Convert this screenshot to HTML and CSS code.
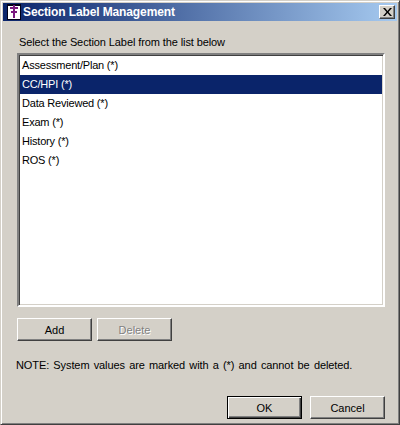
FILE: index.html
```html
<!DOCTYPE html>
<html lang="en">
<head>
    <meta charset="UTF-8">
    <title>Section Label Management</title>
    <link rel="stylesheet" href="styles.css">
</head>
<body>

<div class="window">
    <!-- Title bar -->
    <div class="titlebar">
        <svg class="app-icon" width="14" height="16" viewBox="0 0 14 16">
            <rect x="0" y="0" width="14" height="16" fill="#000018"/>
            <rect x="1" y="1" width="12" height="14" fill="#fff"/>
            <rect x="1" y="1" width="12" height="1" fill="#000018"/>
            <rect x="6" y="1" width="2" height="13" fill="#7a1a80"/>
            <rect x="3" y="3" width="8" height="2" fill="#7a1a80"/>
            <rect x="4" y="7" width="6" height="2" fill="#7a1a80"/>
        </svg>
        <span class="title">Section Label Management</span>
        <button class="close-btn">
            <svg width="9" height="8" viewBox="0 0 9 8">
                <path d="M0 0h2l2.500 3 2.500-3h2l-3.500 4 3.500 4h-2l-2.500-3-2.500 3h-2l3.500-4z" fill="#000"/>
            </svg>
        </button>
    </div>

    <div class="content">
        <p class="prompt">Select the Section Label from the list below</p>

        <ul class="listbox">
            <li>Assessment/Plan (*)</li>
            <li class="selected">CC/HPI (*)</li>
            <li>Data Reviewed (*)</li>
            <li>Exam (*)</li>
            <li>History (*)</li>
            <li>ROS (*)</li>
        </ul>

        <div class="list-actions">
            <button class="btn">Add</button>
            <button class="btn disabled">Delete</button>
        </div>

        <p class="note">NOTE: System values are marked with a (*) and cannot be deleted.</p>

        <div class="dialog-actions">
            <button class="btn default">OK</button>
            <button class="btn">Cancel</button>
        </div>
    </div>
</div>

</body>
</html>
```

FILE: styles.css
```css
html, body {
    margin: 0;
    padding: 0;
}
body {
    width: 400px;
    height: 425px;
    overflow: hidden;
    background: #d4d0c8;
    font-family: "Liberation Sans", Arial, sans-serif;
    font-size: 11px;
    color: #000;
}
.window {
    box-sizing: border-box;
    width: 400px;
    height: 425px;
    padding: 2px;
    background: #d4d0c8;
    border-top: 1px solid #d4d0c8;
    border-left: 1px solid #d4d0c8;
    border-right: 1px solid #404040;
    border-bottom: 1px solid #404040;
    box-shadow: inset 1px 1px 0 #fff, inset -1px -1px 0 #808080;
    display: flex;
    flex-direction: column;
}
.titlebar {
    height: 18px;
    flex: none;
    display: flex;
    align-items: center;
    padding: 0 2px 0 4px;
    background: linear-gradient(to right, #0a246a, #a6caf0);
    color: #fff;
}
.app-icon {
    flex: none;
    margin-right: 2px;
}
.title {
    flex: 1;
    font-weight: bold;
    font-size: 12px;
    letter-spacing: -0.12px;
    white-space: nowrap;
}
.close-btn {
    box-sizing: border-box;
    width: 16px;
    height: 14px;
    padding: 0;
    display: flex;
    align-items: center;
    justify-content: center;
    background: #d4d0c8;
    border: 1px solid;
    border-color: #fff #404040 #404040 #fff;
    box-shadow: inset -1px -1px 0 #808080;
}
.content {
    flex: 1;
    display: flex;
    flex-direction: column;
    padding: 0 12px 0 14px;
}
.prompt {
    margin: 14px 0 0 2px;
    height: 14px;
    line-height: 14px;
    letter-spacing: -0.1px;
    white-space: nowrap;
}
.listbox {
    box-sizing: border-box;
    list-style: none;
    margin: 4px 0 0;
    padding: 1px 1px 0;
    height: 254px;
    background: #fff;
    border: 2px solid;
    border-color: #808080 #fff #fff #808080;
    box-shadow: inset 1px 1px 0 #404040, inset -1px -1px 0 #d4d0c8;
}
.listbox li {
    height: 19px;
    line-height: 19px;
    padding: 0 2px;
    letter-spacing: -0.2px;
}
.listbox li.selected {
    background: #0a246a;
    color: #fff;
}
.list-actions {
    display: flex;
    gap: 5px;
    margin-top: 11px;
}
.btn {
    box-sizing: border-box;
    width: 75px;
    height: 23px;
    padding: 0;
    font: inherit;
    color: #000;
    background: #d4d0c8;
    border: 1px solid;
    border-color: #fff #404040 #404040 #fff;
    box-shadow: inset -1px -1px 0 #808080;
}
.btn.disabled {
    color: #808080;
    text-shadow: 1px 1px 0 #fff;
}
.btn.default {
    border: 1px solid #000;
    box-shadow: inset 1px 1px 0 #fff, inset -1px -1px 0 #404040, inset -2px -2px 0 #808080;
}
.note {
    margin: 17px 0 0 -1px;
    height: 14px;
    line-height: 14px;
    word-spacing: 1.3px;
    letter-spacing: -0.1px;
    white-space: nowrap;
}
.dialog-actions {
    display: flex;
    justify-content: flex-end;
    gap: 8px;
    margin-top: 24px;
}
```
